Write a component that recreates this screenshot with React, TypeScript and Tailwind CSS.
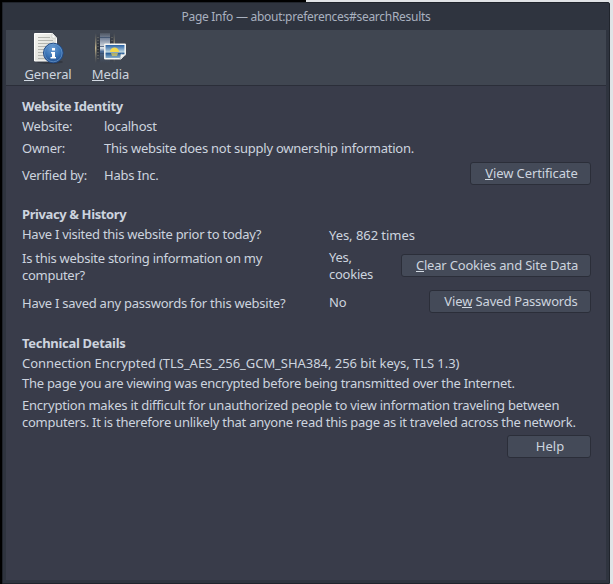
import type { ReactNode } from "react";

function Line({ children, className = "" }: { children: ReactNode; className?: string }) {
  return <div className={`h-[17px] whitespace-nowrap leading-[17px] ${className}`}>{children}</div>;
}

function Key({ children }: { children: ReactNode }) {
  return <span className="inline-block h-[15px] border-b border-[#d3dae3] leading-[17px]">{children}</span>;
}

function Button({ children, className }: { children: ReactNode; className: string }) {
  return (
    <button className={`flex h-[23px] shrink-0 items-center justify-center whitespace-nowrap rounded-[3px] border border-[#2b2e39] bg-[#444a58] pl-0.5 leading-[17px] ${className}`}>
      <span>{children}</span>
    </button>
  );
}

function GeneralIcon() {
  return (
    <svg width="32" height="32" viewBox="0 0 32 32">
      <defs>
        <linearGradient id="paper" x2="1" y2="1">
          <stop stopColor="#f5f5f1" />
          <stop offset="1" stopColor="#d4d5ce" />
        </linearGradient>
        <radialGradient id="blue" cx=".45" cy=".25" r=".8">
          <stop stopColor="#6d9fd5" />
          <stop offset=".55" stopColor="#3973b5" />
          <stop offset="1" stopColor="#204a87" />
        </radialGradient>
      </defs>
      <ellipse cx="18" cy="30" rx="13" ry="1.8" fill="#252a32" opacity=".5" />
      <path d="M2.5 1.5h18l4 4.5v23h-22z" fill="url(#paper)" stroke="#fff" />
      <path d="M20 1.5V6h4.5z" fill="#fff" stroke="#bfc2be" strokeWidth=".6" />
      <path d="M6 5.5h12M6 8.5h15M6 11.5h15M6 14.5h12M6 17.5h7M6 20.5h6M6 23.5h6M6 26.5h7" stroke="#b4b6b0" />
      <circle cx="21.3" cy="21" r="9.8" fill="url(#blue)" stroke="#204a87" />
      <circle cx="21.3" cy="21" r="8.8" fill="none" stroke="#729fcf" opacity=".65" />
      <path d="M20 16h3v2.5h-3zM19 20h4v5h1v1.5h-5.5V25H20v-3.5h-1z" fill="#fff" />
    </svg>
  );
}

function MediaIcon() {
  return (
    <svg className="ml-px" width="32" height="32" viewBox="0 0 32 32">
      <defs>
        <linearGradient id="strip" x2="0" y2="1">
          <stop stopColor="#8794a8" stopOpacity=".2" />
          <stop offset=".2" stopColor="#7b899f" />
          <stop offset=".5" stopColor="#e2e7eb" />
          <stop offset=".62" stopColor="#496994" />
          <stop offset="1" stopColor="#55657a" stopOpacity="0" />
        </linearGradient>
        <linearGradient id="film" x2="0" y2="1">
          <stop stopColor="#2d323b" stopOpacity="0" />
          <stop offset=".5" stopColor="#272c35" stopOpacity=".9" />
          <stop offset="1" stopColor="#2d323b" stopOpacity="0" />
        </linearGradient>
        <linearGradient id="edge" x2="0" y2="1">
          <stop stopColor="#847e72" stopOpacity="0" />
          <stop offset=".5" stopColor="#c5b78f" />
          <stop offset="1" stopColor="#817b6b" stopOpacity="0" />
        </linearGradient>
        <linearGradient id="sky" x2="0" y2="1">
          <stop stopColor="#2760a3" />
          <stop offset=".55" stopColor="#c1d8df" />
          <stop offset=".62" stopColor="#245995" />
          <stop offset="1" stopColor="#89b0ca" />
        </linearGradient>
      </defs>
      <path d="M1 1h18v30H1z" fill="url(#film)" />
      <path d="M0 1h1.5v30H0zM18.5 1H20v30h-1.5z" fill="url(#edge)" />
      <path d="M5 1h10v30H5z" fill="url(#strip)" />
      <path d="M5 5.5h10M5 14.5h10M5 21.5h10" stroke="#354a69" opacity=".7" />
      <path d="M3 5v22M17 5v22" stroke="#77766f" strokeDasharray="1 2" />
      <path d="M9.5 12h21v10.5L26 27H9.5z" fill="#fff" stroke="#eff0ec" strokeLinejoin="round" />
      <path d="M10.5 13h19v8.5L25 26H10.5z" fill="url(#sky)" />
      <path d="M15 20a4.5 4.5 0 019 0z" fill="#f4d94c" />
      <path d="M16 21h7l-1 3h-5z" fill="#d9c85a" opacity=".75" />
      <path d="M25 27l1-5 4.5 1z" fill="#f6f6f3" stroke="#adb7bc" strokeWidth=".6" />
    </svg>
  );
}

export default function App() {
  return (
    <div className="h-[584px] w-[613px] overflow-hidden bg-[linear-gradient(90deg,#000_306px,#e1e3e6_306px)] pl-[2px] pr-[3px] pt-[2px] font-['Noto_Sans','Open_Sans',sans-serif] text-[13px] text-[#cdd4df]">
      <main className="flex h-[582px] w-[608px] flex-col rounded-tr-[2px] border border-[#20242c] bg-[#2f343f] px-[3px] pb-[3px]">
        <header className="flex h-[27px] shrink-0 items-center justify-center text-[12px] tracking-[-0.28px] text-[#a9b1bf]">
          <span>Page Info — about:preferences#searchResults</span>
        </header>
        <nav className="flex h-[56px] shrink-0 border-b border-[#2b2e39] bg-[#404651] pl-[12px]">
          <div className="flex w-[60px] flex-col items-center pt-[2px]">
            <GeneralIcon />
            <Line className="mt-0.5 tracking-[-0.1px]"><Key>G</Key>eneral</Line>
          </div>
          <div className="flex w-[65px] flex-col items-center pt-[2px]">
            <MediaIcon />
            <Line className="mt-0.5 tracking-[-0.1px]"><Key>M</Key>edia</Line>
          </div>
        </nav>
        <div className="flex-1 bg-[#393c4a] pl-4 pr-[15px] pt-[12px] tracking-[-0.25px]">
          <section className="h-[108px]">
            <Line className="font-bold tracking-[-0.43px]">Website Identity</Line>
            <div className="mt-[3px] flex"><Line className="w-[82px]">Website:</Line><Line>localhost</Line></div>
            <div className="mt-[5px] flex"><Line className="w-[82px]">Owner:</Line><Line>This website does not supply ownership information.</Line></div>
            <div className="mt-[5px] flex">
              <Line className="mt-[5px] w-[82px]">Verified by:</Line>
              <Line className="mt-[5px] flex-1">Habs Inc.</Line>
              <Button className="w-[121px] tracking-[-0.12px]"><Key>V</Key>iew Certificate</Button>
            </div>
          </section>
          <section className="h-[129px]">
            <Line className="font-bold tracking-[-0.4px]">Privacy &amp; History</Line>
            <div className="mt-[3px] flex h-[24px]"><Line className="w-[307px] tracking-[-0.27px]">Have I visited this website prior to today?</Line><Line className="mt-px tracking-[-0.05px]">Yes, 862 times</Line></div>
            <div className="flex h-[40px]">
              <div className="w-[307px] tracking-[-0.27px]"><Line>Is this website storing information on my</Line><Line>computer?</Line></div>
              <div className="-mt-px flex-1"><Line>Yes,</Line><Line>cookies</Line></div>
              <Button className="mt-[4px] w-[190px] tracking-[-0.2px]"><Key>C</Key>lear Cookies and Site Data</Button>
            </div>
            <div className="flex">
              <Line className="mt-[5px] w-[307px]">Have I saved any passwords for this website?</Line>
              <Line className="mt-[4px] flex-1">No</Line>
              <Button className="w-[162px] tracking-[-0.18px]">Vie<Key>w</Key> Saved Passwords</Button>
            </div>
          </section>
          <section>
            <Line className="font-bold tracking-[-0.3px]">Technical Details</Line>
            <Line className="mt-[3px] tracking-[-0.045px]">Connection Encrypted (TLS_AES_256_GCM_SHA384, 256 bit keys, TLS 1.3)</Line>
            <Line className="mt-[3px] tracking-[-0.27px]">The page you are viewing was encrypted before being transmitted over the Internet.</Line>
            <Line className="mt-[5px] tracking-[-0.22px]">Encryption makes it difficult for unauthorized people to view information traveling between</Line>
            <Line>computers. It is therefore unlikely that anyone read this page as it traveled across the network.</Line>
            <div className="mt-[4px] flex justify-end"><Button className="w-[84px] tracking-[0px]">Help</Button></div>
          </section>
        </div>
      </main>
    </div>
  );
}
